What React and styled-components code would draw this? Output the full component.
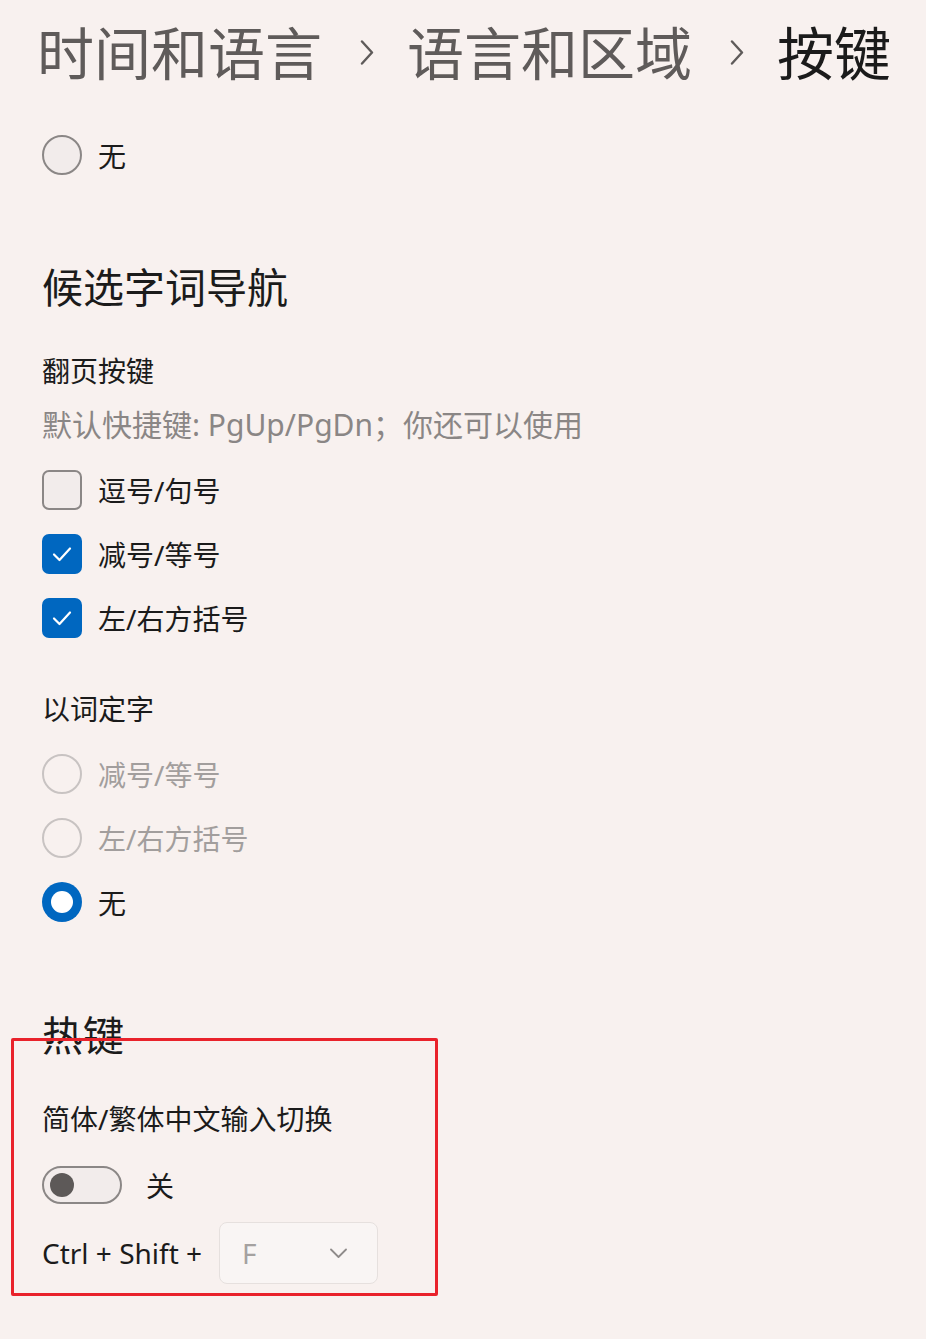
import React from "react";
import styled, { createGlobalStyle } from "styled-components";

const Global = createGlobalStyle`
  html, body { margin: 0; padding: 0; background: #f8f1ef; }
  body {
    font-family: "Noto Sans", "Noto Sans CJK SC", sans-serif;
    color: #1b1b1b;
  }
`;

const Page = styled.div`
  position: relative;
  width: 926px;
  height: 1339px;
  box-sizing: border-box;
  padding-left: 42px;
  background: #f8f1ef;
  display: flex;
  flex-direction: column;
  overflow: hidden;
`;

const Breadcrumb = styled.div`
  display: flex;
  align-items: center;
  height: 100px;
  margin-left: -5px;
  font-family: "Noto Sans CJK SC", sans-serif;
  font-size: 57px;
  line-height: 100px;
`;

const Crumb = styled.span`
  color: ${(p) => (p.$current ? "#1b1b1b" : "#5f5b5a")};
  white-space: nowrap;
`;

const Sep = styled.span`
  display: flex;
  align-items: center;
  margin: 0 33px 0 38px;
  padding-top: 4px;
`;

const Heading = styled.div`
  font-family: "Noto Sans CJK SC", sans-serif;
  font-size: 41px;
  line-height: 56px;
  height: 56px;
  color: #1b1b1b;
  margin-top: ${(p) => p.$mt}px;
`;

const Label = styled.div`
  font-family: "Noto Sans", "Noto Sans CJK SC", sans-serif;
  font-size: ${(p) => p.$size || 28}px;
  line-height: 40px;
  height: 40px;
  color: ${(p) => p.$color || "#1b1b1b"};
  margin-top: ${(p) => p.$mt || 0}px;
  white-space: nowrap;
`;

const OptionList = styled.div`
  display: flex;
  flex-direction: column;
  gap: 24px;
  margin-top: ${(p) => p.$mt}px;
`;

const Option = styled.div`
  display: flex;
  align-items: center;
  gap: 16px;
  height: 40px;
  font-family: "Noto Sans", "Noto Sans CJK SC", sans-serif;
  font-size: 28px;
  color: ${(p) => (p.$disabled ? "#a29e9d" : "#1b1b1b")};
`;

const RadioCircle = styled.span`
  box-sizing: border-box;
  width: 40px;
  height: 40px;
  border-radius: 50%;
  flex: none;
  display: flex;
  align-items: center;
  justify-content: center;
  border: ${(p) =>
    p.$checked ? "none" : p.$disabled ? "2px solid #c8c3c2" : "2px solid #8b8786"};
  background: ${(p) =>
    p.$checked ? "#0067c0" : p.$disabled ? "transparent" : "#f2eceb"};
`;

const RadioDot = styled.span`
  width: 22px;
  height: 22px;
  border-radius: 50%;
  background: #ffffff;
`;

const CheckBox = styled.span`
  box-sizing: border-box;
  width: 40px;
  height: 40px;
  border-radius: 7px;
  flex: none;
  display: flex;
  align-items: center;
  justify-content: center;
  border: ${(p) => (p.$checked ? "none" : "2px solid #8b8786")};
  background: ${(p) => (p.$checked ? "#0067c0" : "#f2eceb")};
`;

const ToggleRow = styled.div`
  display: flex;
  align-items: center;
  gap: 24px;
  height: 40px;
  margin-top: 26px;
  font-family: "Noto Sans CJK SC", sans-serif;
  font-size: 28px;
`;

const Toggle = styled.span`
  box-sizing: border-box;
  width: 80px;
  height: 38px;
  border-radius: 19px;
  border: 2px solid #8b8786;
  background: #f2eceb;
  display: flex;
  align-items: center;
  padding-left: 6px;
`;

const Knob = styled.span`
  width: 24px;
  height: 24px;
  border-radius: 50%;
  background: #5d5958;
`;

const ShortcutRow = styled.div`
  display: flex;
  align-items: center;
  gap: 17px;
  margin-top: 17px;
  font-family: "Noto Sans", sans-serif;
  font-size: 28px;
  color: #1b1b1b;
`;

const Dropdown = styled.div`
  box-sizing: border-box;
  width: 159px;
  height: 62px;
  border: 1.5px solid #e6e0de;
  border-radius: 8px;
  background: #f9f5f4;
  display: flex;
  align-items: center;
  justify-content: space-between;
  padding: 0 30px 0 22px;
  font-family: "Noto Sans", sans-serif;
  font-size: 28px;
  color: #a5a1a0;
`;

const Highlight = styled.div`
  position: absolute;
  left: 11px;
  top: 1038px;
  width: 427px;
  height: 258px;
  box-sizing: border-box;
  border: 3px solid #e9222b;
  border-radius: 2px;
  pointer-events: none;
`;

const Chevron = ({ color = "#5f5b5a" }) => (
  <svg width="14" height="25" viewBox="0 0 14 25">
    <path d="M2 1.5 L12 12.5 L2 23.5" fill="none" stroke={color} strokeWidth="2.4" strokeLinecap="round" strokeLinejoin="round" />
  </svg>
);

const Check = () => (
  <svg width="24" height="24" viewBox="0 0 24 24">
    <path d="M4 12.5 L9.5 18 L20 6.5" fill="none" stroke="#ffffff" strokeWidth="2.2" strokeLinecap="round" strokeLinejoin="round" />
  </svg>
);

const SmallChevronDown = () => (
  <svg width="17" height="11" viewBox="0 0 17 11">
    <path d="M1 1.5 L8.5 9 L16 1.5" fill="none" stroke="#8f8b8a" strokeWidth="1.8" strokeLinecap="round" strokeLinejoin="round" />
  </svg>
);

const Radio = ({ checked, disabled, children }) => (
  <Option $disabled={disabled}>
    <RadioCircle $checked={checked} $disabled={disabled}>
      {checked && <RadioDot />}
    </RadioCircle>
    <span>{children}</span>
  </Option>
);

const CheckOption = ({ checked, children }) => (
  <Option>
    <CheckBox $checked={checked}>{checked && <Check />}</CheckBox>
    <span>{children}</span>
  </Option>
);

export default function App() {
  return (
    <>
      <Global />
      <Page>
        <Breadcrumb>
          <Crumb>时间和语言</Crumb>
          <Sep><Chevron /></Sep>
          <Crumb>语言和区域</Crumb>
          <Sep><Chevron /></Sep>
          <Crumb $current>按键</Crumb>
        </Breadcrumb>

        <OptionList $mt={35}>
          <Radio>无</Radio>
        </OptionList>

        <Heading $mt={82}>候选字词导航</Heading>
        <Label $mt={38}>翻页按键</Label>
        <Label $mt={14} $size={30} $color="#8a8685">默认快捷键: PgUp/PgDn；你还可以使用</Label>

        <OptionList $mt={25}>
          <CheckOption>逗号/句号</CheckOption>
          <CheckOption checked>减号/等号</CheckOption>
          <CheckOption checked>左/右方括号</CheckOption>
        </OptionList>

        <Label $mt={51}>以词定字</Label>
        <OptionList $mt={25}>
          <Radio disabled>减号/等号</Radio>
          <Radio disabled>左/右方括号</Radio>
          <Radio checked>无</Radio>
        </OptionList>

        <Heading $mt={83}>热键</Heading>
        <Label $mt={38}>简体/繁体中文输入切换</Label>
        <ToggleRow>
          <Toggle><Knob /></Toggle>
          <span>关</span>
        </ToggleRow>
        <ShortcutRow>
          <span>Ctrl + Shift +</span>
          <Dropdown>
            <span>F</span>
            <SmallChevronDown />
          </Dropdown>
        </ShortcutRow>

        <Highlight />
      </Page>
    </>
  );
}
